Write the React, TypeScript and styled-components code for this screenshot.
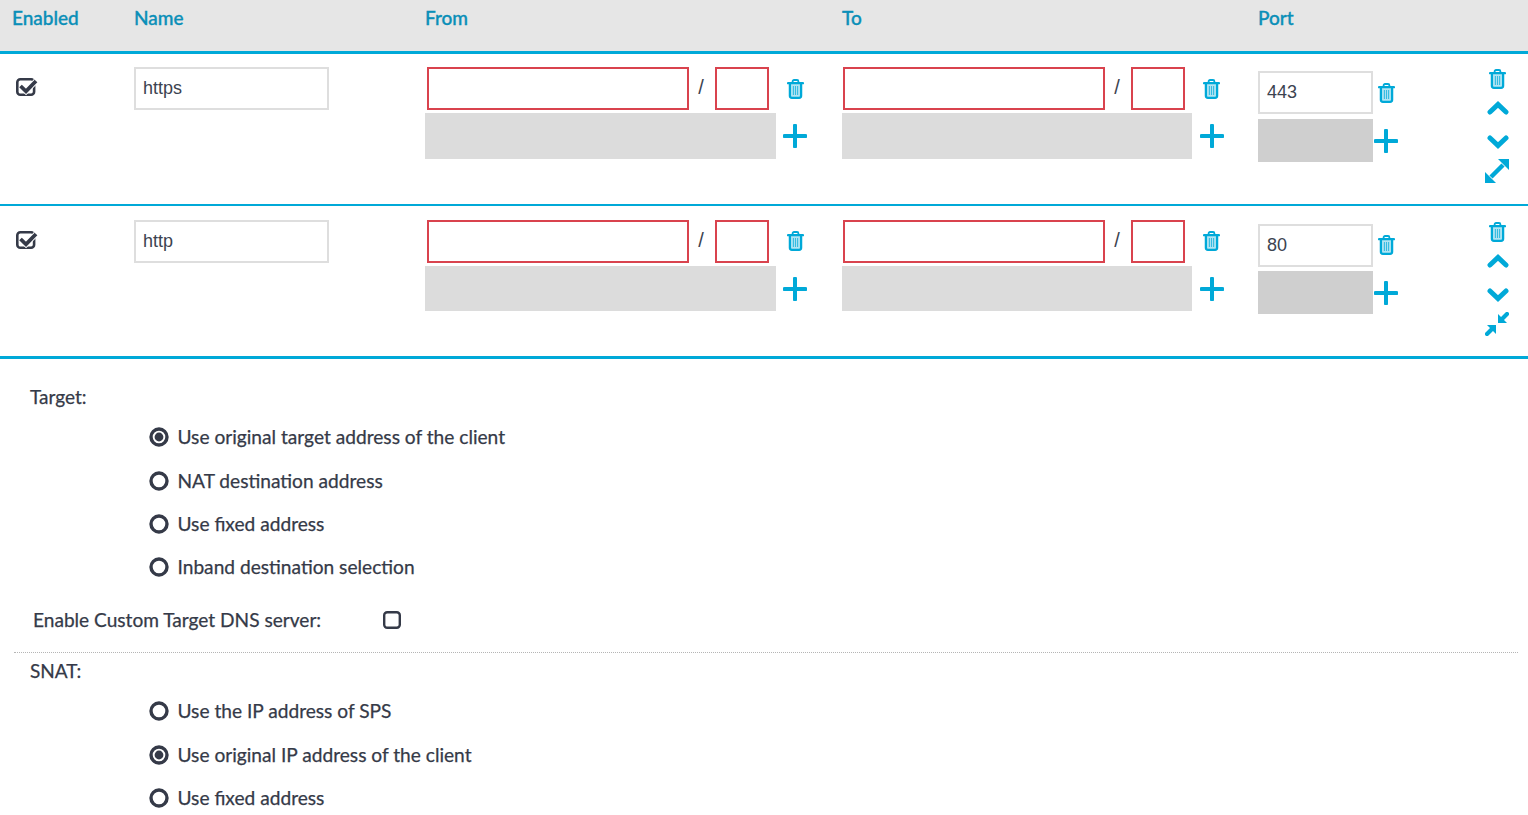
import React from "react";
import styled, { createGlobalStyle } from "styled-components";

const Global = createGlobalStyle`
  html, body { margin: 0; padding: 0; background: #fff; overflow: hidden; }
  body { font-family: Lato, "Liberation Sans", sans-serif; color: #353a48; }
`;
const Page = styled.div`width: 1528px; height: 815px; overflow: hidden;`;
const Columns = "134px 291px 417px 416px 227px 43px";
const Header = styled.div`
  display: grid; grid-template-columns: ${Columns}; height: 51px; box-sizing: content-box;
  background: #e6e6e6; border-bottom: 3px solid #00a9d8;
`;
const HeadCell = styled.div<{ $x?: number }>`
  font-size: 19px; font-weight: 500; color: #0b8fb8; padding: 7px 0 0 ${p => p.$x ?? 0}px; line-height: 22px;
  -webkit-text-stroke: 0.35px #0b8fb8;
`;
const Row = styled.div<{ $second?: boolean }>`
  display: grid; grid-template-columns: ${Columns}; height: 150px;
  border-bottom: ${p => (p.$second ? "3px" : "2px")} solid #00a9d8; box-sizing: content-box;
`;
const Cell = styled.div<{ $second?: boolean }>`padding-top: ${p => (p.$second ? 14 : 13)}px; min-width: 0;`;
const CheckCell = styled.div<{ $second?: boolean }>`padding: ${p => (p.$second ? 25 : 24)}px 0 0 16px;`;
const TextInput = styled.div<{ $w: number }>`
  width: ${p => p.$w}px; height: 43px; box-sizing: border-box; border: 2px solid #dedede; background: #fff;
  font: 18px/39px "Liberation Sans", Arial, sans-serif; color: #3c4350; padding-left: 7px; flex: none;
`;
const RedInput = styled.div<{ $w: number }>`
  width: ${p => p.$w}px; height: 43px; box-sizing: border-box; border: 2px solid #d9434e; flex: none;
`;
const Line = styled.div<{ $pl: number }>`display: flex; align-items: center; padding-left: ${p => p.$pl}px; height: 43px;`;
const Slash = styled.span`
  width: 24px; margin-right: 2px; text-align: center; font: 20px "Liberation Sans", Arial, sans-serif;
  color: #3c4350; flex: none; margin-top: -3px;
`;
const AddLine = styled.div`display: flex; align-items: center; margin-top: 3px;`;
const GrayBlock = styled.div<{ $w: number; $h: number; $c: string }>`
  width: ${p => p.$w}px; height: ${p => p.$h}px; background: ${p => p.$c}; flex: none;
`;
const IconSlot = styled.span<{ $ml: number; $lift?: boolean }>`
  display: inline-flex; margin-left: ${p => p.$ml}px; margin-top: ${p => (p.$lift ? -2 : 0)}px;
`;
const PortBox = styled.div`margin-top: 4px;`;
const PortLine = styled.div`display: flex; align-items: center; height: 43px;`;
const PortAdd = styled.div<{ $second?: boolean }>`display: flex; align-items: center; margin-top: ${p => (p.$second ? 4 : 5)}px;`;
const Actions = styled.div<{ $second?: boolean }>`
  display: flex; flex-direction: column; align-items: center; width: 26px; padding-top: ${p => (p.$second ? 16 : 15)}px;
`;
const Action = styled.span<{ $h: number; $mr?: number }>`
  display: flex; height: ${p => p.$h}px; align-items: flex-start; margin-right: ${p => p.$mr ?? 0}px;
`;

const Form = styled.div`padding-top: 26px;`;
const Label = styled.div`
  font-size: 19px; line-height: 24px; padding-left: 30px; height: 24px; -webkit-text-stroke: 0.25px #353a48;
`;
const Options = styled.div<{ $gap: number }>`
  display: flex; flex-direction: column; padding: 16.2px 0 0 149px; row-gap: ${p => p.$gap}px;
`;
const Option = styled.div`
  display: flex; align-items: center; gap: 8.5px; font-size: 19.15px; line-height: 24px; height: 24px;
  -webkit-text-stroke: 0.25px #353a48;
`;
const DnsRow = styled.div`
  display: flex; align-items: center; padding: 29px 0 0 33px; height: 24px; font-size: 19.1px; line-height: 24px;
  -webkit-text-stroke: 0.25px #353a48;
`;
const DnsLabel = styled.span`width: 350px; flex: none;`;
const Divider = styled.div`margin: 19.77px 10px 0 14px; border-top: 1px dotted #b5b5b5;`;
const SnatLabel = styled(Label)`margin-top: 6px;`;

const Blue = "#00a9d8";
const Dark = "#353a48";

const Trash = () => (
  <svg width="17" height="20" viewBox="0 0 17 20">
    <path d="M3 5h11v11.8c0 1.2-.8 2-2 2H5c-1.2 0-2-.8-2-2z" fill={Blue} opacity=".3" />
    <path d="M1 4.2h15" stroke={Blue} strokeWidth="2.2" strokeLinecap="round" fill="none" />
    <path d="M5.6 4V2.4C5.6 1.5 6.3 1 7 1h3c.8 0 1.4.5 1.4 1.4V4" stroke={Blue} strokeWidth="1.8" fill="none" />
    <path d="M2.9 5v11.8c0 1.2.8 2 2 2h7.2c1.2 0 2-.8 2-2V5" stroke={Blue} strokeWidth="2.3" fill="none" />
    <path d="M6.4 7v9M8.5 7v9M10.6 7v9" stroke={Blue} strokeWidth="1.1" opacity=".7" fill="none" />
  </svg>
);
const Plus = () => (
  <svg width="24" height="24" viewBox="0 0 24 24">
    <path d="M12 1.5v21M1.5 12h21" stroke={Blue} strokeWidth="4" strokeLinecap="round" fill="none" />
  </svg>
);
const Chevron = ({ down }: { down?: boolean }) => (
  <svg width="22" height="14" viewBox="0 0 22 14">
    <path d={down ? "M3 3l8 7.5 8-7.5" : "M3 11l8-7.5 8 7.5"} stroke={Blue} strokeWidth="5" strokeLinecap="round" strokeLinejoin="miter" fill="none" />
  </svg>
);
const Expand = () => (
  <svg width="24" height="24" viewBox="0 0 24 24">
    <path d="M13 0h11v11z" fill={Blue} />
    <path d="M0 13v11h11z" fill={Blue} />
    <path d="M18 6L6 18" stroke={Blue} strokeWidth="4.4" fill="none" />
  </svg>
);
const Compress = () => (
  <svg width="24" height="24" viewBox="0 0 24 24">
    <path d="M13 2v9h9z" fill={Blue} />
    <path d="M11 22v-9H2z" fill={Blue} />
    <path d="M16 8l6-6M8 16l-6 6" stroke={Blue} strokeWidth="4.2" strokeLinecap="round" fill="none" />
  </svg>
);
const CheckedBox = () => (
  <svg width="22" height="18" viewBox="0 0 22 18">
    <rect x="1.3" y="1.3" width="16.8" height="15.4" rx="3" stroke={Dark} strokeWidth="2.6" fill="none" />
    <path d="M4.5 8l5.5 5.3L20 3" stroke="#fff" strokeWidth="5.6" fill="none" />
    <path d="M4.5 8l5.5 5.3L20 3" stroke={Dark} strokeWidth="3.8" fill="none" />
  </svg>
);
const EmptyBox = () => (
  <svg width="18" height="18" viewBox="0 0 18 18">
    <rect x="1.2" y="1.2" width="15.6" height="15.6" rx="3" stroke={Dark} strokeWidth="2.4" fill="none" />
  </svg>
);
const Radio = ({ on }: { on?: boolean }) => (
  <svg width="20" height="20" viewBox="0 0 20 20" style={{ flex: "none" }}>
    <circle cx="10" cy="10" r="8" stroke={Dark} strokeWidth="3.4" fill="none" />
    {on && <circle cx="10" cy="10" r="4.4" fill={Dark} />}
  </svg>
);

const AddressCell = ({ grayW, pl, plusMl, second }: { grayW: number; pl: number; plusMl: number; second?: boolean }) => (
  <Cell $second={second}>
    <Line $pl={pl}>
      <RedInput $w={262} />
      <Slash>/</Slash>
      <RedInput $w={54} />
      <IconSlot $ml={18} $lift={second}><Trash /></IconSlot>
    </Line>
    <AddLine>
      <GrayBlock $w={grayW} $h={second ? 45 : 46} $c="#dcdcdc" />
      <IconSlot $ml={plusMl}><Plus /></IconSlot>
    </AddLine>
  </Cell>
);

const DataRow = ({ name, port, second }: { name: string; port: string; second?: boolean }) => (
  <Row $second={second}>
    <CheckCell $second={second}><CheckedBox /></CheckCell>
    <Cell $second={second}><TextInput $w={195}>{name}</TextInput></Cell>
    <AddressCell grayW={351} pl={2} plusMl={7} second={second} />
    <AddressCell grayW={350} pl={1} plusMl={8} second={second} />
    <Cell $second={second}>
      <PortBox>
        <PortLine>
          <TextInput $w={115}>{port}</TextInput>
          <IconSlot $ml={5} $lift={second}><Trash /></IconSlot>
        </PortLine>
        <PortAdd $second={second}>
          <GrayBlock $w={115} $h={43} $c="#cfcfcf" />
          <IconSlot $ml={1}><Plus /></IconSlot>
        </PortAdd>
      </PortBox>
    </Cell>
    <Actions $second={second}>
      <Action $h={32} $mr={2}><Trash /></Action>
      <Action $h={34}><Chevron /></Action>
      <Action $h={24}><Chevron down /></Action>
      <Action $h={24} $mr={2}>{second ? <Compress /> : <Expand />}</Action>
    </Actions>
  </Row>
);

export default function App() {
  return (
    <Page>
      <Global />
      <Header>
        <HeadCell $x={12}>Enabled</HeadCell>
        <HeadCell>Name</HeadCell>
        <HeadCell>From</HeadCell>
        <HeadCell>To</HeadCell>
        <HeadCell>Port</HeadCell>
        <HeadCell />
      </Header>
      <DataRow name="https" port="443" />
      <DataRow name="http" port="80" second />
      <Form>
        <Label>Target:</Label>
        <Options $gap={19.34}>
          <Option><Radio on />Use original target address of the client</Option>
          <Option><Radio />NAT destination address</Option>
          <Option><Radio />Use fixed address</Option>
          <Option><Radio />Inband destination selection</Option>
        </Options>
        <DnsRow><DnsLabel>Enable Custom Target DNS server:</DnsLabel><EmptyBox /></DnsRow>
        <Divider />
        <SnatLabel>SNAT:</SnatLabel>
        <Options $gap={19.5}>
          <Option><Radio />Use the IP address of SPS</Option>
          <Option><Radio on />Use original IP address of the client</Option>
          <Option><Radio />Use fixed address</Option>
        </Options>
      </Form>
    </Page>
  );
}
